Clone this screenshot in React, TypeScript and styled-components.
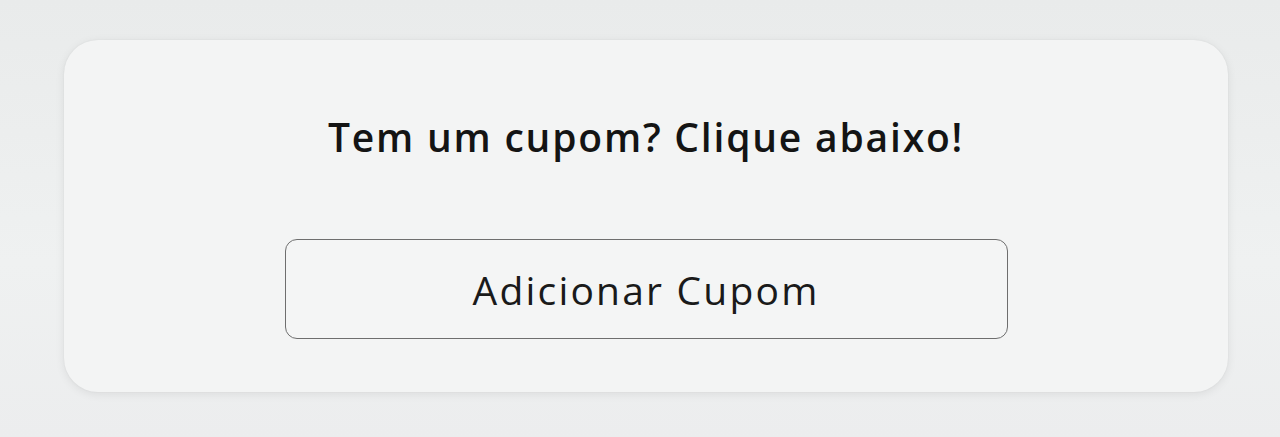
import React from "react";
import styled, { createGlobalStyle } from "styled-components";

const Global = createGlobalStyle`
  html, body {
    margin: 0;
    padding: 0;
    background: #eaecec;
    font-family: "Open Sans", "Noto Sans", sans-serif;
  }
`;

const Page = styled.div`
  width: 1280px;
  height: 437px;
  box-sizing: border-box;
  padding: 40px 52px 45px 64px;
  background: linear-gradient(180deg, #e9ebeb 0%, #eff1f1 60%, #ecedee 100%);
`;

const Card = styled.section`
  height: 352px;
  box-sizing: border-box;
  border-radius: 34px;
  background: #f3f4f4;
  box-shadow: 0 2px 10px rgba(0, 0, 0, 0.08), 0 0 2px rgba(0, 0, 0, 0.06);
  display: flex;
  flex-direction: column;
  align-items: center;
  padding-top: 74px;
`;

const Title = styled.h2`
  margin: 0;
  font-size: 39px;
  font-weight: 600;
  line-height: 46px;
  letter-spacing: 1.8px;
  color: #141414;
`;

const CouponButton = styled.button`
  margin-top: 79px;
  width: 723px;
  height: 100px;
  box-sizing: border-box;
  border: 1.5px solid #6e6e6e;
  border-radius: 12px;
  background: #f4f5f5;
  font-family: inherit;
  font-size: 39px;
  font-weight: 400;
  letter-spacing: 2.2px;
  color: #1a1a1a;
  cursor: pointer;
`;

export default function App() {
  return (
    <>
      <Global />
      <Page>
        <Card>
          <Title>Tem um cupom? Clique abaixo!</Title>
          <CouponButton>Adicionar Cupom</CouponButton>
        </Card>
      </Page>
    </>
  );
}
